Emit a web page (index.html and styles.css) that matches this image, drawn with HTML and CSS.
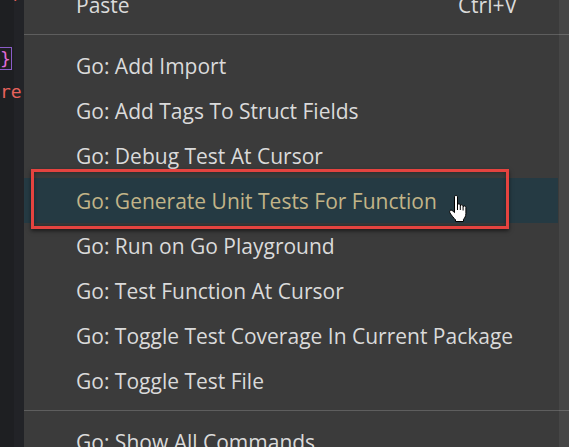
FILE: index.html
```html
<!DOCTYPE html>
<html>
<head>
<meta charset="utf-8">
<link rel="stylesheet" href="styles.css">
</head>
<body>
<div class="screen">
  <div class="editor">
    <div class="code-line"><span class="tok-red">1;</span></div>
    <div class="code-line"></div>
    <div class="code-line"><span class="tok-brace">}</span></div>
    <div class="code-line"><span class="tok-red">re</span></div>
  </div>
  <div class="menu">
    <div class="menu-list">
      <div class="item"><span class="label">Paste</span><span class="key">Ctrl+V</span></div>
      <div class="sep"></div>
      <div class="item"><span class="label">Go: Add Import</span></div>
      <div class="item"><span class="label">Go: Add Tags To Struct Fields</span></div>
      <div class="item"><span class="label">Go: Debug Test At Cursor</span></div>
      <div class="item active"><span class="label">Go: Generate Unit Tests For Function</span></div>
      <div class="item"><span class="label">Go: Run on Go Playground</span></div>
      <div class="item"><span class="label">Go: Test Function At Cursor</span></div>
      <div class="item"><span class="label">Go: Toggle Test Coverage In Current Package</span></div>
      <div class="item"><span class="label">Go: Toggle Test File</span></div>
      <div class="sep"></div>
      <div class="item"><span class="label">Go: Show All Commands</span></div>
    </div>
    <div class="scrollbar"></div>
  </div>
  <div class="annotation"></div>
  <svg class="cursor" width="20" height="28" viewBox="0 0 20 28">
    <path d="M6.5 2 C6.5 1 7.2 0.5 8 0.5 C8.8 0.5 9.5 1 9.5 2 V10 C9.5 9.2 10.1 8.7 10.9 8.7 C11.7 8.7 12.3 9.3 12.3 10 V11 C12.3 10.3 12.9 9.8 13.7 9.8 C14.5 9.8 15.1 10.4 15.1 11.1 V12.2 C15.1 11.5 15.7 11 16.5 11 C17.3 11 17.9 11.6 17.9 12.4 V18.5 C17.9 21.2 16.6 23.2 15.5 24.3 V26.5 H7.5 V24.8 C6 23.3 3.6 20.5 2 18 C1.3 16.8 1.6 15.4 2.7 15.2 C3.7 15 4.6 15.7 6.5 17.6 Z" fill="#ffffff" stroke="#000000" stroke-width="1" stroke-linejoin="round"/>
    <path d="M9.5 10 V15 M12.3 11 V15 M15.1 12.2 V15.5" stroke="#000000" stroke-width="1" fill="none"/>
  </svg>
</div>
</body>
</html>
```
FILE: styles.css
```css
html, body {
  margin: 0;
  padding: 0;
  background: #1e1f22;
}
.screen {
  position: relative;
  display: flex;
  width: 569px;
  height: 447px;
  overflow: hidden;
}
.editor {
  width: 24px;
  flex: none;
  background: linear-gradient(to right, #1e1f22 14px, #222327 14px);
  display: flex;
  flex-direction: column;
  margin-top: -24px;
  font-family: "DejaVu Sans Mono", "Liberation Mono", monospace;
  font-size: 18px;
}
.code-line {
  height: 33px;
  line-height: 33px;
  white-space: nowrap;
}
.tok-red { color: #e8625c; }
.tok-brace {
  color: #e06bd8;
  outline: 1px solid #8a5cc8;
}
.menu {
  position: relative;
  flex: 1;
  background: #3b3b3b;
  overflow: hidden;
}
.menu-list {
  display: flex;
  flex-direction: column;
  margin-top: -18px;
  margin-right: 11px;
  font-family: "Open Sans", "Noto Sans", sans-serif;
  font-size: 21px;
  color: #dadada;
}
.item {
  height: 45px;
  display: flex;
  align-items: center;
  justify-content: space-between;
  padding: 0 41px 0 52px;
  white-space: nowrap;
}
.item.active {
  background: #253a43;
  color: #c2b488;
}
.sep {
  height: 1px;
  background: #5e5e5e;
  margin: 7px -11px 8px 0;
}
.scrollbar {
  position: absolute;
  top: 0;
  right: 0;
  bottom: 0;
  width: 10px;
  background: rgba(255, 255, 255, 0.06);
}
.annotation {
  position: absolute;
  left: 31px;
  top: 169px;
  width: 478px;
  height: 60px;
  box-sizing: border-box;
  border: 3px solid #e5433f;
  box-shadow: 0 2px 4px rgba(0, 0, 0, 0.55), inset 0 0 5px rgba(0, 0, 0, 0.35);
}
.cursor {
  position: absolute;
  left: 448px;
  top: 195px;
}
```
